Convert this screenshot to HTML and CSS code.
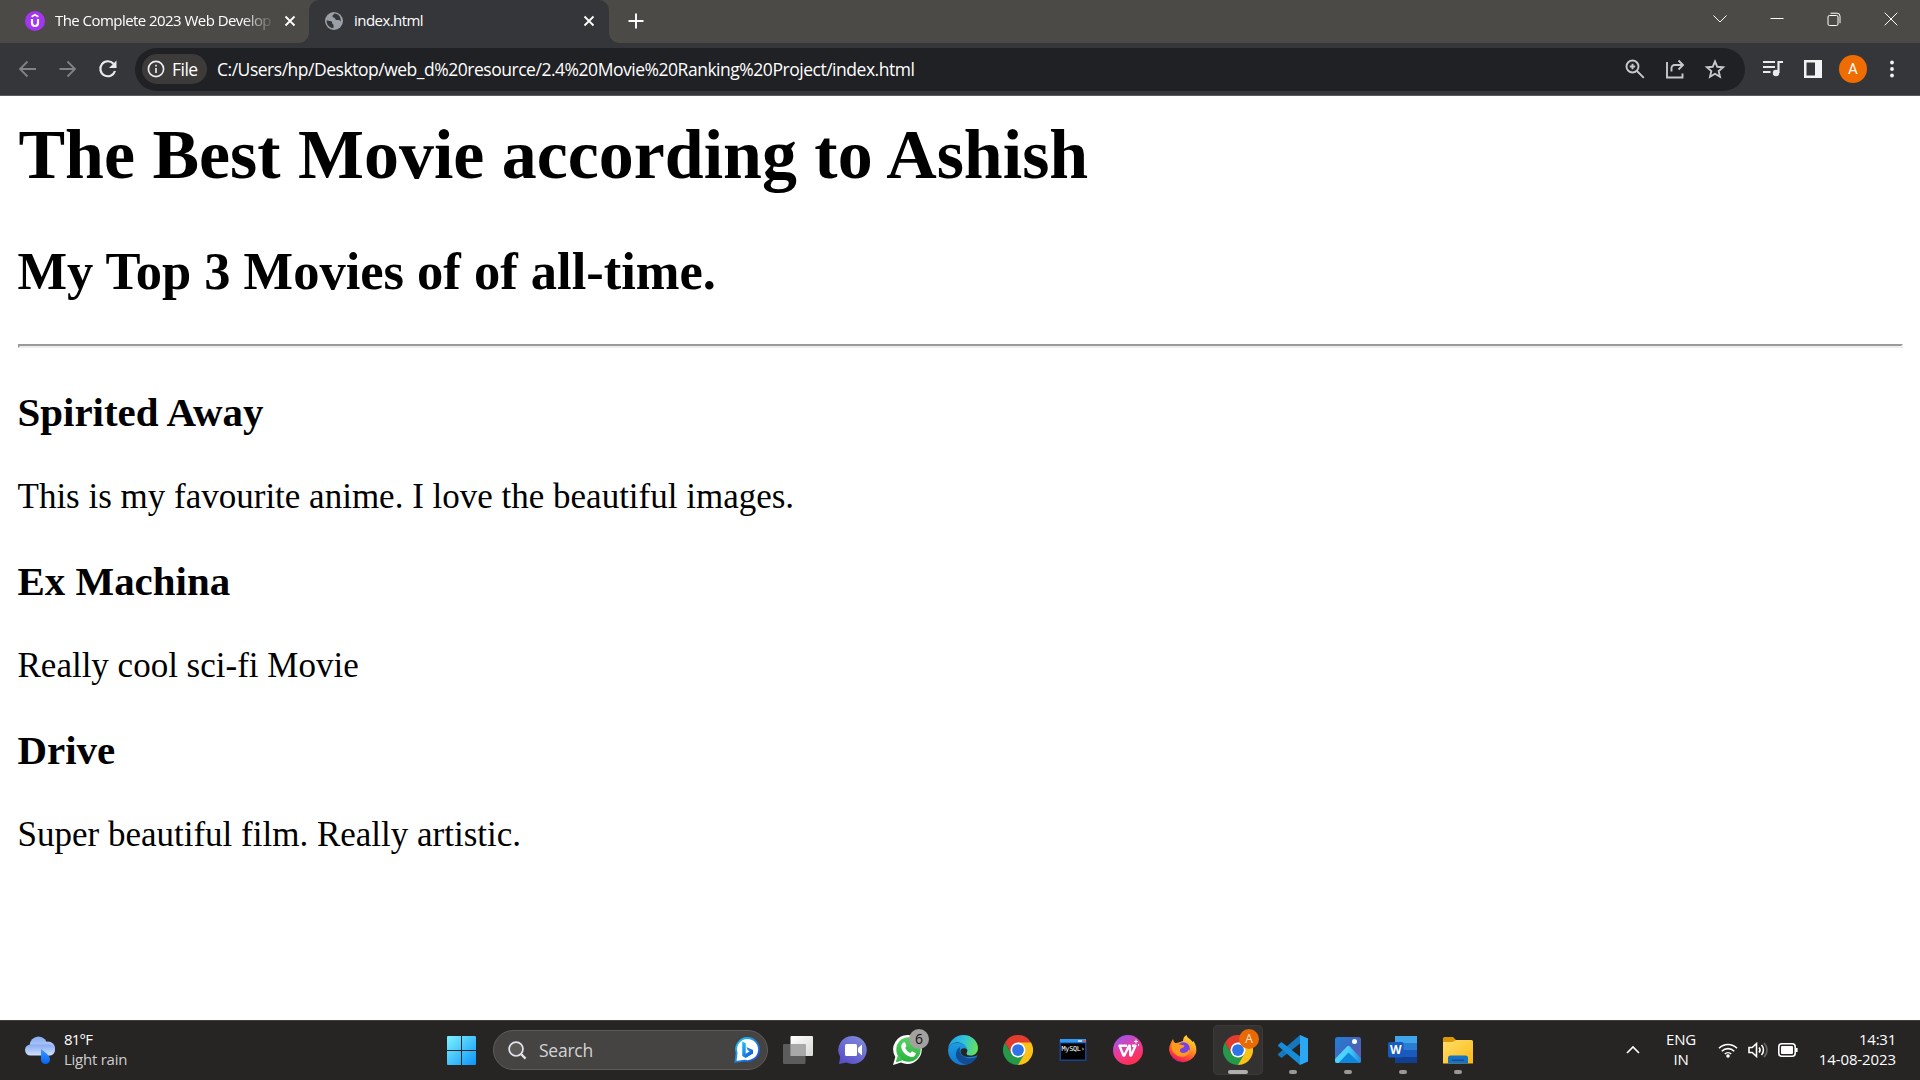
FILE: index.html
```html
<!DOCTYPE html>
<html lang="en">
<head>
<meta charset="utf-8">
<title>index.html</title>
<link rel="stylesheet" href="styles.css">
</head>
<body>
<svg width="0" height="0" class="defs">
  <defs>
    <linearGradient id="win" x1="0" y1="0" x2="1" y2="1"><stop offset="0" stop-color="#7df3ff"/><stop offset="1" stop-color="#0c94f8"/></linearGradient>
    <linearGradient id="cloud" x1="0" y1="0" x2="0" y2="1"><stop offset="0" stop-color="#86aaf2"/><stop offset="1" stop-color="#d3e0fa"/></linearGradient>
    <linearGradient id="drop" x1="0" y1="0" x2="0" y2="1"><stop offset="0" stop-color="#3f9bff"/><stop offset="1" stop-color="#0763f2"/></linearGradient>
    <linearGradient id="bing" x1="0" y1="0" x2="1" y2="1"><stop offset="0" stop-color="#20c5f5"/><stop offset="1" stop-color="#1748d8"/></linearGradient>
    <linearGradient id="chat" x1="1" y1="0" x2="0.3" y2="1"><stop offset="0" stop-color="#8290dc"/><stop offset="1" stop-color="#5b50c8"/></linearGradient>
    <linearGradient id="wa" x1="0" y1="0" x2="0" y2="1"><stop offset="0" stop-color="#5bd066"/><stop offset="1" stop-color="#27b43e"/></linearGradient>
    <linearGradient id="edgeA" x1="0" y1="0.3" x2="1" y2="0.5"><stop offset="0" stop-color="#1d9de8"/><stop offset="0.5" stop-color="#30c3dc"/><stop offset="1" stop-color="#66e05a"/></linearGradient>
    <linearGradient id="edgeB" x1="0" y1="0" x2="0" y2="1"><stop offset="0" stop-color="#1b9de2"/><stop offset="1" stop-color="#1576cf"/></linearGradient>
    <linearGradient id="wps" x1="0" y1="0" x2="0.5" y2="1"><stop offset="0" stop-color="#8a5cff"/><stop offset="0.55" stop-color="#e83ba0"/><stop offset="1" stop-color="#ff3050"/></linearGradient>
    <linearGradient id="fox" x1="0.8" y1="0" x2="0.3" y2="1"><stop offset="0" stop-color="#ffe53a"/><stop offset="0.45" stop-color="#ff9422"/><stop offset="0.75" stop-color="#ff4338"/><stop offset="1" stop-color="#e2156f"/></linearGradient>
    <linearGradient id="photo" x1="0" y1="0" x2="1" y2="1"><stop offset="0" stop-color="#1f7fd8"/><stop offset="0.6" stop-color="#4a62b8"/><stop offset="1" stop-color="#6a55b0"/></linearGradient>
    <linearGradient id="hill" x1="0" y1="0" x2="1" y2="0"><stop offset="0" stop-color="#48d4ff"/><stop offset="0.5" stop-color="#4cd2fb"/><stop offset="1" stop-color="#1c8ee0"/></linearGradient>
    <linearGradient id="folder" x1="0" y1="0" x2="1" y2="1"><stop offset="0" stop-color="#ffdf6b"/><stop offset="1" stop-color="#fdb813"/></linearGradient>
    <linearGradient id="tv" x1="0" y1="0" x2="1" y2="1"><stop offset="0" stop-color="#ffffff"/><stop offset="1" stop-color="#d8d8d8"/></linearGradient>
    <symbol id="chrome" viewBox="0 0 48 48">
      <path fill="#e33b2e" d="M24 24 3.2 12a24 24 0 0 1 41.6 0z"/>
      <path fill="#fbc116" d="M24 24 V12 H44.8 A24 24 0 0 1 24 48z"/>
      <path fill="#24994a" d="M24 48A24 24 0 0 1 3.2 12L13.6 30l10.4 6 10.4-6z"/>
      <path fill="#e33b2e" d="M3.2 12 13.6 30 24 24V12z"/>
      <circle cx="24" cy="24" r="12" fill="#fff"/><circle cx="24" cy="24" r="9.4" fill="#2c74e8"/>
    </symbol>
  </defs>
</svg>
<div class="window">
  <header class="tabstrip">
    <div class="tab tab-back">
      <svg class="favicon" viewBox="0 0 20 20"><circle cx="10" cy="10" r="10" fill="#a435f0"/><path d="M6.600 5.800 10 3.800l3.400 2" fill="none" stroke="#fff" stroke-width="1.800"/><path d="M7 8v4a3 3 0 0 0 6 0V8" fill="none" stroke="#fff" stroke-width="2.200"/></svg>
      <span class="tab-title faded">The Complete 2023 Web Develop</span>
      <svg class="tab-close" viewBox="0 0 12 12"><path d="M1.500 1.500 10.500 10.500M10.500 1.500 1.500 10.500"/></svg>
    </div>
    <div class="tab tab-active">
      <svg class="globe" viewBox="0 0 18 18"><circle cx="9" cy="9" r="9" fill="#9aa0a6"/><path fill="#35363a" d="M9.400 1.600c-.4 1.200-2.200 1.300-1.900 2.800.2 1.300 2 .8 2.500 2 .6 1.300 1.500 2 2.700 1.600 1.200-.4 2.400.2 2.900 1.600.8-4.200-2-7.700-6.200-8zM1.700 8.200c1.500 0 2.300.9 3.600.9s1.900.7 1.800 1.900c0 1.100 1.400 1 1.400 2.200v2.900C4.500 16 1.200 12.600 1.700 8.200z"/></svg>
      <span class="tab-title">index.html</span>
      <svg class="tab-close" viewBox="0 0 12 12"><path d="M1.500 1.500 10.500 10.500M10.500 1.500 1.500 10.500"/></svg>
    </div>
    <svg class="new-tab" viewBox="0 0 16 16"><path d="M8 0.500v15M0.500 8h15"/></svg>
    <div class="window-controls">
      <svg viewBox="0 0 14 14"><path d="M.5 3.500 7 10l6.500-6.500"/></svg>
      <svg viewBox="0 0 14 14"><path d="M.5 6.500h13"/></svg>
      <svg viewBox="0 0 14 14"><rect x="1" y="3.500" width="10" height="10" rx="1.500"/><path d="M3.500 1.200h6.500a3 3 0 0 1 3 3v7"/></svg>
      <svg viewBox="0 0 14 14"><path d="M.7.700 13.300 13.300M13.300.700.700 13.300"/></svg>
    </div>
  </header>
  <nav class="toolbar">
    <div class="nav-buttons">
      <svg class="dim" viewBox="0 0 20 20"><path d="M18 10H2.500M9.500 2.500 2 10l7.500 7.500"/></svg>
      <svg class="dim" viewBox="0 0 20 20"><path d="M1.500 10H17M9.500 2.500 17 10l-7.500 7.500"/></svg>
      <svg viewBox="0 0 20 20"><path d="M15.500 4.800A7.500 7.500 0 1 0 17 12" stroke-width="2.200"/><path d="M18.500 1.500v7.500H11z" fill="#e8eaed" stroke="none"/></svg>
    </div>
    <div class="omnibox">
      <div class="chip">
        <svg viewBox="0 0 18 18"><circle cx="9" cy="9" r="7.600"/><path d="M9 8v5M9 4.800v1.800"/></svg>
        <span>File</span>
      </div>
      <span class="url">C:/Users/hp/Desktop/web_d%20resource/2.4%20Movie%20Ranking%20Project/index.html</span>
      <div class="box-icons">
        <svg viewBox="0 0 20 20"><circle cx="7.500" cy="7.500" r="6"/><path d="m12 12 6.800 6.800M7.500 4.800v5.400M4.800 7.500h5.400"/></svg>
        <svg viewBox="0 0 20 20"><path d="M2 3v15.500h15.500v-4M6.500 12.500V9a3 3 0 0 1 3-3H17M13.500 1.500 18 6l-4.500 4.500"/></svg>
        <svg viewBox="0 0 20 20"><path d="m10 2.500 2.300 5.300 5.800.5-4.400 3.800 1.300 5.700-5-3-5 3 1.300-5.700-4.400-3.800 5.800-.5z"/></svg>
      </div>
    </div>
    <div class="actions">
      <svg viewBox="0 0 20 20"><path d="M0 3h12M0 8h12M0 13h7.500M15.500 14V3h4.500" stroke-width="2.200"/><circle cx="13" cy="14" r="3.200" fill="#e8eaed" stroke="none"/></svg>
      <svg viewBox="0 0 20 20"><path fill="#f1f3f4" stroke="none" fill-rule="evenodd" d="M1 1h18v18H1zM3.500 3.500v13h8.500v-13z"/></svg>
      <div class="avatar">A</div>
      <svg class="dots" viewBox="0 0 4 18"><circle cx="2" cy="2.500" r="1.900"/><circle cx="2" cy="9" r="1.900"/><circle cx="2" cy="15.500" r="1.900"/></svg>
    </div>
  </nav>
  <main class="page">
    <h1>The Best Movie according to Ashish</h1>
    <h2>My Top 3 Movies of of all-time.</h2>
    <hr>
    <h3>Spirited Away</h3>
    <p>This is my favourite anime. I love the beautiful images.</p>
    <h3>Ex Machina</h3>
    <p>Really cool sci-fi Movie</p>
    <h3>Drive</h3>
    <p>Super beautiful film. Really artistic.</p>
  </main>
  <footer class="taskbar">
    <div class="weather">
      <svg viewBox="0 0 30 28"><circle cx="13.500" cy="9.500" r="9" fill="url(#cloud)"/><circle cx="23" cy="12.500" r="7" fill="#a9c2f5"/><rect x="0" y="8.500" width="30" height="11" rx="5.500" fill="url(#cloud)"/><path d="M16 13c5 4 9 6.500 9 10.500a4.500 4.500 0 0 1-9 0z" fill="url(#drop)"/></svg>
      <div><div class="temp">81°F</div><div class="cond">Light rain</div></div>
    </div>
    <svg class="start" viewBox="0 0 29 29"><path fill="url(#win)" d="M0 1a1 1 0 0 1 1-1h13v14H0zM15 0h13a1 1 0 0 1 1 1v13H15zM0 15h14v14H1a1 1 0 0 1-1-1zM15 15h14v13a1 1 0 0 1-1 1H15z"/></svg>
    <div class="search">
      <svg class="lens" viewBox="0 0 20 20"><circle cx="8.500" cy="8.500" r="7.300" fill="#5b5a59"/><path d="m13.800 13.800 4.700 4.700" stroke-width="2.400"/></svg>
      <span>Search</span>
      <svg class="bing" viewBox="0 0 26 26"><path fill="#fff" stroke="url(#bing)" stroke-width="1.800" d="M13.500 1a11.500 11.500 0 1 1-3 22.600L1.500 24.800 2.600 16A11.500 11.500 0 0 1 13.500 1z"/><path fill="url(#bing)" d="m8.200 4.500 3.500 1.800v10.500l4-2.600-2-1-1.400-3.200 6.700 3v3.400L11.700 21l-3.500-2z"/></svg>
    </div>
    <div class="apps">
      <div class="app"><svg viewBox="0 0 30 30"><rect x="7.500" y="1" width="22.500" height="20" rx="1" fill="url(#tv)"/><rect x="0" y="9" width="22.500" height="20" rx="1" fill="#666" fill-opacity=".85"/><rect x="7.500" y="9" width="15" height="12" fill="#a8a8a8"/></svg></div>
      <div class="app"><svg viewBox="0 0 30 30"><path fill="url(#chat)" d="M15 1a14 14 0 1 1-6.500 26.500L1 29l1.200-7A14 14 0 0 1 15 1z"/><rect x="7" y="9" width="12" height="12" rx="1.500" fill="#fff"/><path fill="#fff" d="m20 13 4-3.500v11L20 17z"/></svg></div>
      <div class="app"><svg viewBox="0 0 30 30"><path fill="#fff" d="M15.500 0A14.500 14.500 0 1 1 8 27.500L0 30l2.300-8A14.500 14.500 0 0 1 15.500 0z"/><circle cx="15.500" cy="14.500" r="12.200" fill="url(#wa)"/><path fill="url(#wa)" d="m2.800 27.200 2-7 5 5z"/><path fill="#fff" d="M10.500 7.500c1.200-.5 1.700 0 2 1l.9 2.200c.2.800-1.300 1.700-1.100 2.300.9 2.300 2.500 3.900 4.900 4.900.6.200 1.500-1.800 2.200-1.500l2.700 1.300c.8.400.6 1.200.3 2-.7 1.700-2.700 2.600-4.500 2.200-5.200-1.200-9-5.200-9.600-9.800-.1-1.900.7-3.900 2.200-4.600z"/></svg><span class="count">6</span></div>
      <div class="app"><svg viewBox="0 0 30 30"><path fill="url(#edgeB)" d="M0 15C1 9 6 7.500 11 8c6 .5 8.500 4 8.500 7 0 2-1 2.500-1 3.500 0 4 8 4 11 1.500C27 26.500 21 30 15 30 6 30 0 23 0 15z"/><path fill="#124d93" d="M12 12c-7 5-5 15 6 17.600 5-.6 9-3.800 11-7.800-6 3-15.500 1.200-17.400-5.400z"/><path fill="url(#edgeA)" d="M0 14C1 6 7.500 0 15.500 0 24 0 30 6.500 30 13c0 5-3.500 7.500-7.500 7.500-3 0-5-1-4-2.700C21 13 16 7.500 9.500 7.500 5 7.500 1.500 10 0 14z"/><path fill="#262524" d="M12.500 16c0-3 5-4 6.800-1.200.5 1.700-.8 2.700-.8 3.700 0 2 3 2.700 6 2.500-6 2.500-12 0-12-5z"/></svg></div>
      <div class="app"><svg><use href="#chrome"/></svg></div>
      <div class="app"><svg viewBox="0 0 30 30"><rect x="1.500" y="4" width="27" height="22" rx="1" fill="#17458c"/><rect x="2" y="4" width="26" height="3.500" fill="#2e9af5"/><rect x="20" y="5" width="4" height="2" fill="#a8d8ff"/><rect x="25" y="5" width="2.500" height="2" fill="#f04d38"/><rect x="3" y="8.500" width="24" height="16" fill="#000"/><text class="mysql" x="3.500" y="15.500">MySQL›</text></svg></div>
      <div class="app"><svg viewBox="0 0 30 30"><circle cx="15" cy="15" r="15" fill="url(#wps)"/><path fill="none" stroke="#fff" stroke-width="2.400" stroke-linejoin="round" d="M14 10.800H6.500l4 9.700h.8l4.700-9.700h.8l.5 9.700h.8l4.400-9.700h-3.500"/><path d="M23 4.500v4M21 6.500h4M25.500 9v2" stroke="#fff" stroke-width="1"/></svg></div>
      <div class="app"><svg viewBox="0 0 30 30"><path fill="url(#fox)" d="M15 6c0-3 1.500-5 3.500-6 .5 3 4.500 4 6 7l1-1c2.500 4 3.500 7.500 2.500 12A14 14 0 0 1 1 15c0-4 1.500-6 2.500-8.500L5 4l1.500 4.500C9 8 12 7 15 6z"/><circle cx="15.500" cy="13.500" r="6.200" fill="#7542e5"/><path fill="#ff9a1f" d="M3.500 12c0-3 .5-4 2.500-5 1.500 1.500 4 1.500 6 2.500l4.500 1c-.5 2.500-3.500 2.500-4.500 4-.5 2.500 1.500 4 4 3.500 2.500-.5 4-2 5-3.500 1 2 0 5.500-4.500 7C9.500 23 4 18 3.500 12z"/></svg></div>
      <div class="app current"><svg><use href="#chrome"/></svg><span class="profile">A</span></div>
      <div class="app running"><svg viewBox="0 0 30 30"><path fill="#1378bd" d="M22 0v8.500L3.500 23 .6 20.600c-.8-.7-.8-1.500 0-2.200z"/><path fill="#168bd6" d="M22 30v-8.500L3.500 7 .6 9.400c-.8.700-.8 1.500 0 2.200z"/><path fill="#2ba7f3" d="m22 0 8 3.500v23L22 30z"/></svg></div>
      <div class="app running"><svg viewBox="0 0 30 30"><rect x="2" y="2" width="26" height="26" rx="2.500" fill="url(#photo)"/><path fill="url(#hill)" d="M2 24 14 11.500a2 2 0 0 1 3 0L28 23.500V26a2 2 0 0 1-2 2H4a2 2 0 0 1-2-2z"/><path fill="#0e86dc" d="m5.500 28 10-10.500L26.500 28z"/><circle cx="21.500" cy="6.500" r="2.500" fill="#fff"/></svg></div>
      <div class="app running"><svg viewBox="0 0 30 30"><path fill="#41a5ee" d="M7 1h22v7H7z"/><path fill="#2b7cd3" d="M7 8h22v7H7z"/><path fill="#185abd" d="M7 15h22v7H7z"/><path fill="#103f91" d="M7 22h22v6H7z"/><rect x="0" y="7" width="15.500" height="15.500" rx="1.500" fill="#185abd"/><text class="word" x="2" y="18.500">W</text></svg></div>
      <div class="app running"><svg viewBox="0 0 30 30"><path fill="#dc9708" d="M0 3.500A1.500 1.500 0 0 1 1.500 2H10l3 3v4H0z"/><path fill="url(#folder)" d="M0 7h9.500L13 5h15.500A1.500 1.500 0 0 1 30 6.500v22H0z"/><path fill="#1672c4" d="M5 28.500V23a2.500 2.500 0 0 1 2.500-2.500h15A2.500 2.500 0 0 1 25 23v5.500z"/><path fill="#0f4f96" d="M9 24.500h12v1.500H9z"/></svg></div>
    </div>
    <div class="tray">
      <svg class="up" viewBox="0 0 14 8"><path d="m1 7 6-6 6 6"/></svg>
      <div class="lang"><div>ENG</div><div>IN</div></div>
      <svg class="wifi" viewBox="0 0 20 15"><path d="M1 5.200a12.700 12.700 0 0 1 18 0M3.800 8.200a8.700 8.700 0 0 1 12.400 0M6.800 11a4.600 4.600 0 0 1 6.400 0"/><circle cx="10" cy="13" r="1.800" fill="#fff" stroke="none"/></svg>
      <svg class="volume" viewBox="0 0 20 16"><path d="M1 5.500h3.200L8.500 1.500v13L4.200 10.500H1z"/><path d="M11 5.500c1.200 1.400 1.200 3.600 0 5M13.500 3c2.600 2.800 2.600 7.200 0 10"/><path d="M16 1c4 4 4 10 0 14" stroke="#666"/></svg>
      <svg class="battery" viewBox="0 0 20 14"><rect x=".8" y=".8" width="16.400" height="12.400" rx="3"/><rect x="3" y="3" width="12" height="8" rx="1" fill="#fff" stroke="none"/><path d="M18.800 5v4"/></svg>
      <div class="clock"><div class="time">14:31</div><div class="date">14-08-2023</div></div>
    </div>
  </footer>
</div>
</body>
</html>
```
FILE: styles.css
```css
* { box-sizing: border-box; }
body { margin: 0; font-family: "Open Sans", "Noto Sans", sans-serif; }
svg { display: block; flex: none; fill: none; overflow: visible; }
.defs { position: absolute; }
.window { width: 1920px; height: 1080px; display: flex; flex-direction: column; overflow: hidden; background: #fff; }

.tabstrip { height: 43px; flex: none; display: flex; background: #4c4a47; color: #fff; }
.tab { height: 43px; display: flex; align-items: center; }
.tab-back { width: 309px; padding: 0 13px 1px 25px; background: #4c4a47; }
.favicon { width: 20px; height: 20px; margin-right: 10px; }
.tab-title { flex: 1; padding-bottom: 2px; font-size: 15px; letter-spacing: -0.550px; white-space: nowrap; overflow: hidden; }
.faded { flex: none; width: 220px; -webkit-mask-image: linear-gradient(90deg, #000 85%, transparent 100%); mask-image: linear-gradient(90deg, #000 85%, transparent 100%); }
.tab-close { width: 12px; height: 12px; stroke: #fff; stroke-width: 1.800; }
.tab-back .tab-close { margin-left: 9px; }
.tab-active { position: relative; width: 300px; padding: 0 14px 1px 16px; background: #35363a; border-radius: 10px 10px 0 0; }
.tab-active::before, .tab-active::after { content: ""; position: absolute; bottom: 0; width: 10px; height: 10px; }
.tab-active::before { left: -10px; background: radial-gradient(circle at 0 0, #4c4a47 9.500px, #35363a 10px); }
.tab-active::after { right: -10px; background: radial-gradient(circle at 100% 0, #4c4a47 9.500px, #35363a 10px); }
.globe { width: 18px; height: 18px; margin-right: 11px; }
.new-tab { width: 16px; height: 16px; margin: 13px 0 0 19px; stroke: #fff; stroke-width: 1.900; }
.window-controls { margin: 12px 22px 0 auto; display: flex; gap: 43px; }
.window-controls svg { width: 14px; height: 14px; stroke: #fff; stroke-width: 1; }

.toolbar { height: 53px; flex: none; display: flex; align-items: center; background: #35363a; border-bottom: 1px solid #5b5a5e; }
.nav-buttons { width: 135px; padding-left: 18px; display: flex; gap: 20px; }
.nav-buttons svg { width: 20px; height: 20px; stroke: #e8eaed; stroke-width: 1.800; }
.nav-buttons .dim { stroke: #818285; }
.omnibox { width: 1610px; height: 43px; padding: 0 20px 0 7px; display: flex; align-items: center; background: #202124; border-radius: 22px; color: #fff; }
.chip { width: 65px; height: 30px; padding: 0 0 0 5px; display: flex; align-items: center; gap: 7px; background: #3c3b3a; border-radius: 15px; font-size: 17.500px; letter-spacing: -0.500px; }
.chip svg { width: 18px; height: 18px; stroke: #e8eaed; stroke-width: 1.700; }
.url { margin-left: 10px; font-size: 17.500px; letter-spacing: -0.475px; white-space: nowrap; }
.box-icons { margin-left: auto; display: flex; gap: 20px; }
.box-icons svg { width: 20px; height: 20px; stroke: #c7c8ca; stroke-width: 1.900; }
.actions { flex: 1; padding-left: 18px; display: flex; align-items: center; gap: 20px; }
.actions svg { width: 20px; height: 20px; stroke: #e8eaed; }
.avatar { width: 28px; height: 28px; margin-left: -4px; border-radius: 50%; background: #ef6c00; color: #fff; font: 15px/28px Roboto, sans-serif; text-align: center; }
.actions .dots { width: 4px; height: 18px; margin-left: 3px; fill: #f1f3f4; stroke: none; }

.page { flex: 1; padding: 18px 17.500px 17.500px; font: 35px/40px "Liberation Serif", "Times New Roman", serif; color: #000; }
.page h1 { margin: 0 0 46px; padding-left: 1px; font-size: 69.900px; line-height: 81px; }
.page h2 { margin: 0 0 43px; font-size: 52.500px; line-height: 60px; }
.page hr { margin: 0; border: 2px inset #eee; }
.page h3 { margin: 41px 0; font-size: 40.950px; line-height: 47px; }
.page p { margin: 0; }

.taskbar { height: 60px; flex: none; display: flex; align-items: center; padding-bottom: 1px; background: #262524; border-top: 1px solid #3f3e3d; color: #fff; font-size: 15px; letter-spacing: -0.250px; line-height: 20px; }
.weather { width: 447px; padding-left: 25px; display: flex; align-items: center; gap: 9px; }
.weather svg { width: 30px; height: 28px; }
.temp { letter-spacing: -0.800px; }
.cond { color: #cfcecd; }
.weather > div, .lang, .clock { padding-bottom: 3px; }
.start { width: 29px; height: 29px; }
.search { width: 275px; height: 40px; margin-left: 17px; padding: 0 7px 0 14px; display: flex; align-items: center; background: #454443; border: 1px solid #5d5c5b; border-radius: 20px; color: #d3d3d3; font-size: 17.500px; }
.lens { width: 19px; height: 19px; margin-right: 12px; stroke: #e2e4ea; stroke-width: 1.800; }
.bing { width: 26px; height: 26px; margin-left: auto; }
.apps { display: flex; margin-left: 5px; gap: 5px; }
.app { position: relative; width: 50px; height: 50px; padding: 10px; border-radius: 5px; }
.app > svg { width: 30px; height: 30px; }
.current { background: #333231; box-shadow: inset 0 0 0 1px #3b3a39; }
.current::after, .running::after { content: ""; position: absolute; left: 21px; bottom: 1px; width: 8px; height: 4px; border-radius: 2px; background: #9a9998; }
.current::after { left: 15px; width: 20px; background: #b0afae; }
.count, .profile { position: absolute; left: 26px; top: 4px; width: 20px; height: 20px; border-radius: 50%; background: #a3a19f; color: #111; font-size: 14px; text-align: center; }
.profile { background: #e86a05; color: #ffe3c8; font-size: 12px; }
.mysql { font: 6.800px "DejaVu Sans Mono", monospace; fill: #fff; }
.word { font: bold 12px "Open Sans", sans-serif; fill: #fff; }
.tray { margin-left: auto; padding-right: 24px; display: flex; align-items: center; }
.tray svg { stroke: #fff; stroke-width: 1.600; }
.up { width: 14px; height: 8px; }
.lang { width: 40px; margin: 0 17px 0 21px; text-align: center; }
.wifi { width: 20px; height: 15px; }
.volume { width: 20px; height: 16px; margin-left: 10px; }
.battery { width: 20px; height: 14px; margin-left: 10px; }
.clock { width: 98px; text-align: right; white-space: nowrap; }
.date { letter-spacing: -0.100px; }
```
